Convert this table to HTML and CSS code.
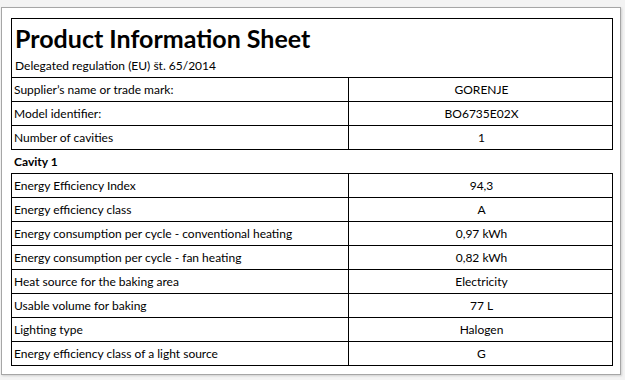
FILE: index.html
```html
<!DOCTYPE html>
<html>
<head>
<meta charset="utf-8">
<link rel="stylesheet" href="styles.css">
</head>
<body>
<div class="page">
  <table class="sheet">
    <colgroup><col class="col-label"><col class="col-value"></colgroup>
    <tr class="head-row">
      <td colspan="2">
        <div class="title">Product Information Sheet</div>
        <div class="subtitle">Delegated regulation (EU) št. 65/2014</div>
      </td>
    </tr>
    <tr><td class="label">Supplier’s name or trade mark:</td><td class="value">GORENJE</td></tr>
    <tr><td class="label">Model identifier:</td><td class="value">BO6735E02X</td></tr>
    <tr><td class="label">Number of cavities</td><td class="value">1</td></tr>
  </table>
  <div class="section">Cavity 1</div>
  <table class="sheet">
    <colgroup><col class="col-label"><col class="col-value"></colgroup>
    <tr><td class="label">Energy Efficiency Index</td><td class="value">94,3</td></tr>
    <tr><td class="label">Energy efficiency class</td><td class="value">A</td></tr>
    <tr><td class="label">Energy consumption per cycle - conventional heating</td><td class="value">0,97 kWh</td></tr>
    <tr><td class="label">Energy consumption per cycle - fan heating</td><td class="value">0,82 kWh</td></tr>
    <tr><td class="label">Heat source for the baking area</td><td class="value">Electricity</td></tr>
    <tr><td class="label">Usable volume for baking</td><td class="value">77 L</td></tr>
    <tr><td class="label">Lighting type</td><td class="value">Halogen</td></tr>
    <tr><td class="label">Energy efficiency class of a light source</td><td class="value">G</td></tr>
  </table>
</div>
</body>
</html>
```
FILE: styles.css
```css
html, body {
  margin: 0;
  padding: 0;
}
body {
  background: #f3f3f3;
  font-family: "Lato", "Liberation Sans", sans-serif;
  color: #000;
  width: 625px;
  height: 380px;
  overflow: hidden;
}
.page {
  margin: 7px 0 0 1px;
  width: 599px;
  height: 346px;
  background: #fff;
  border: 1px solid #a6a6a6;
  padding: 10px 10px 10px 9px;
  box-shadow: 1px 1px 2px rgba(0,0,0,0.15);
}
.sheet {
  border-collapse: collapse;
  width: 602px;
  table-layout: fixed;
}
.col-label {
  width: 337px;
}
.sheet td {
  border: 1px solid #000;
  height: 23px;
  padding: 0 0 0 2px;
  font-size: 12px;
  line-height: 14px;
  vertical-align: middle;
}
.sheet td.value {
  text-align: center;
}
.head-row td {
  height: 58px;
  padding: 0 0 0 3px;
  vertical-align: top;
}
.title {
  font-weight: bold;
  font-size: 25px;
  line-height: 30px;
  margin-top: 4px;
}
.subtitle {
  font-size: 12px;
  line-height: 14px;
  margin-top: 6px;
}
.section {
  font-weight: bold;
  font-size: 12px;
  height: 23px;
  line-height: 23px;
  padding-left: 3px;
}
```
